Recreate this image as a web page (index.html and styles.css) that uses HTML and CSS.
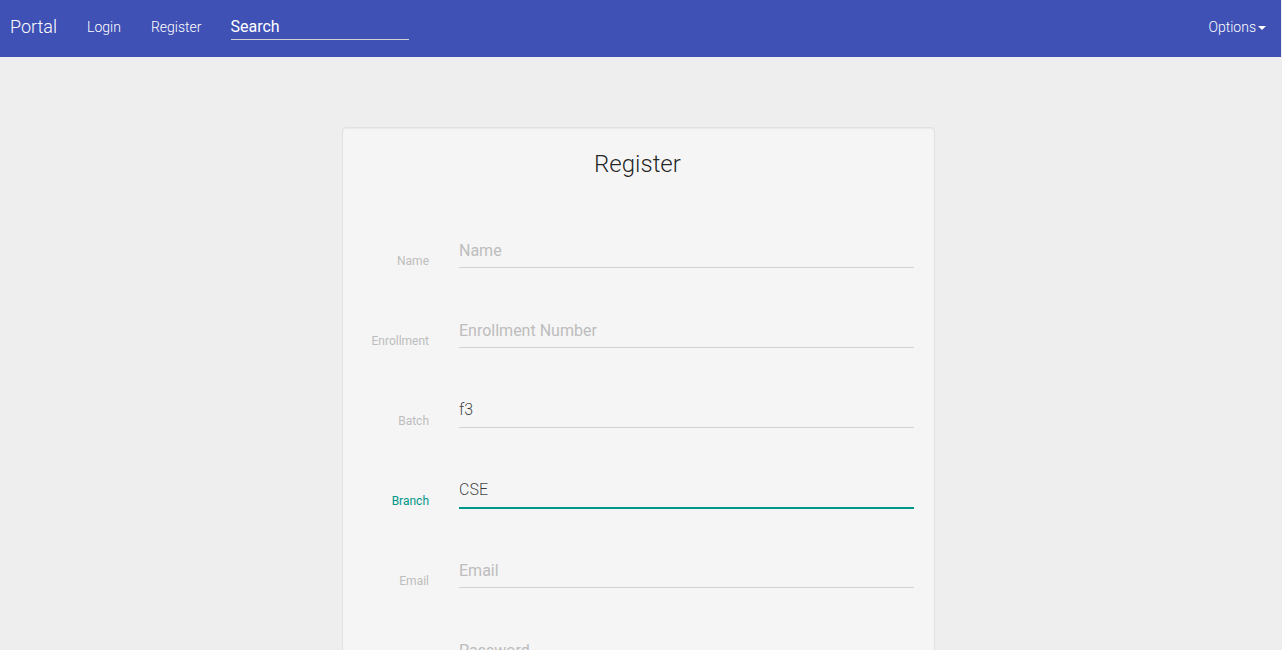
FILE: index.html
```html
<!DOCTYPE html>
<html lang="en">
<head>
<meta charset="utf-8">
<title>Portal</title>
<link rel="stylesheet" href="styles.css">
</head>
<body>
<nav class="navbar">
  <a class="brand" href="#">Portal</a>
  <a class="nav-link" href="#">Login</a>
  <a class="nav-link" href="#">Register</a>
  <form class="search"><input class="search-input" type="text" placeholder="Search" aria-label="Search"></form>
  <button class="options" type="button">Options<span class="caret"></span></button>
</nav>
<main class="page">
  <form class="panel">
    <h1 class="title">Register</h1>
    <div class="field"><label class="label" for="name">Name</label><input class="control" id="name" type="text" placeholder="Name"></div>
    <div class="field"><label class="label" for="enrollment">Enrollment</label><input class="control" id="enrollment" type="text" placeholder="Enrollment Number"></div>
    <div class="field"><label class="label" for="batch">Batch</label><select class="control" id="batch"><option>f3</option></select></div>
    <div class="field focused"><label class="label" for="branch">Branch</label><select class="control" id="branch"><option>CSE</option></select></div>
    <div class="field"><label class="label" for="email">Email</label><input class="control" id="email" type="email" placeholder="Email"></div>
    <div class="field"><label class="label" for="password">Password</label><input class="control" id="password" type="password" placeholder="Password"></div>
  </form>
</main>
</body>
</html>
```

FILE: styles.css
```css
* { box-sizing: border-box; }

html { scrollbar-width: none; }

body {
  margin: 0;
  background: #eeeeee;
  color: rgba(0, 0, 0, 0.87);
  font-family: Roboto, sans-serif;
  font-size: 14px;
  font-weight: 300;
  line-height: 20px;
}

.navbar {
  display: flex;
  align-items: center;
  height: 57px;
  margin-right: 1px;
  padding: 0 15px 3px 10px;
  background: #3f51b5;
  color: #ffffff;
}

.brand,
.nav-link {
  color: inherit;
  text-decoration: none;
}

.brand {
  margin-right: 15px;
  font-size: 18px;
}

.nav-link { padding: 0 15px; }

.search { padding: 0 14px; }

.search-input {
  display: block;
  width: 178px;
  height: 26px;
  padding: 0;
  border: 0;
  border-bottom: 1px solid #d2d2d2;
  background: transparent;
  color: inherit;
  font: 400 16px/24px Roboto, sans-serif;
}

.search-input::placeholder { color: #ffffff; opacity: 1; }

.options {
  display: flex;
  align-items: center;
  gap: 2px;
  margin-left: auto;
  padding: 0;
  border: 0;
  background: none;
  color: inherit;
  font: inherit;
}

.caret {
  margin-top: 2px;
  border-top: 4px solid;
  border-right: 4px solid transparent;
  border-left: 4px solid transparent;
}

.page {
  display: flex;
  justify-content: center;
  padding: 70px 20px 40px 15px;
}

.panel {
  width: 100%;
  max-width: 593px;
  padding: 20px 20px 40px 16px;
  border: 1px solid #e1e1e1;
  border-radius: 4px;
  background: #f5f5f5;
  box-shadow: inset 0 1px 1px rgba(0, 0, 0, 0.05);
}

.title {
  margin: 0 0 48px;
  padding-left: 2px;
  font-size: 24px;
  font-weight: 300;
  line-height: 32px;
  text-align: center;
}

.field {
  display: flex;
  align-items: flex-end;
  gap: 30px;
  height: 40px;
  margin-bottom: 40px;
}

.label {
  width: 70px;
  flex: none;
  color: #bdbdbd;
  font-size: 12px;
  font-weight: 400;
  line-height: 14px;
  text-align: right;
}

.control {
  flex: 1;
  min-width: 0;
  height: 34px;
  padding: 0 0 1px;
  border: 0;
  border-bottom: 1px solid #d2d2d2;
  border-radius: 0;
  outline: 0;
  appearance: none;
  background: transparent;
  color: rgba(0, 0, 0, 0.75);
  font: 300 16px/24px Roboto, sans-serif;
}

.control::placeholder {
  color: #bdbdbd;
  opacity: 1;
  font-weight: 400;
}

.focused .label { color: #009688; }

.focused .control {
  border-bottom-color: #009688;
  box-shadow: 0 1px #009688;
}
```
